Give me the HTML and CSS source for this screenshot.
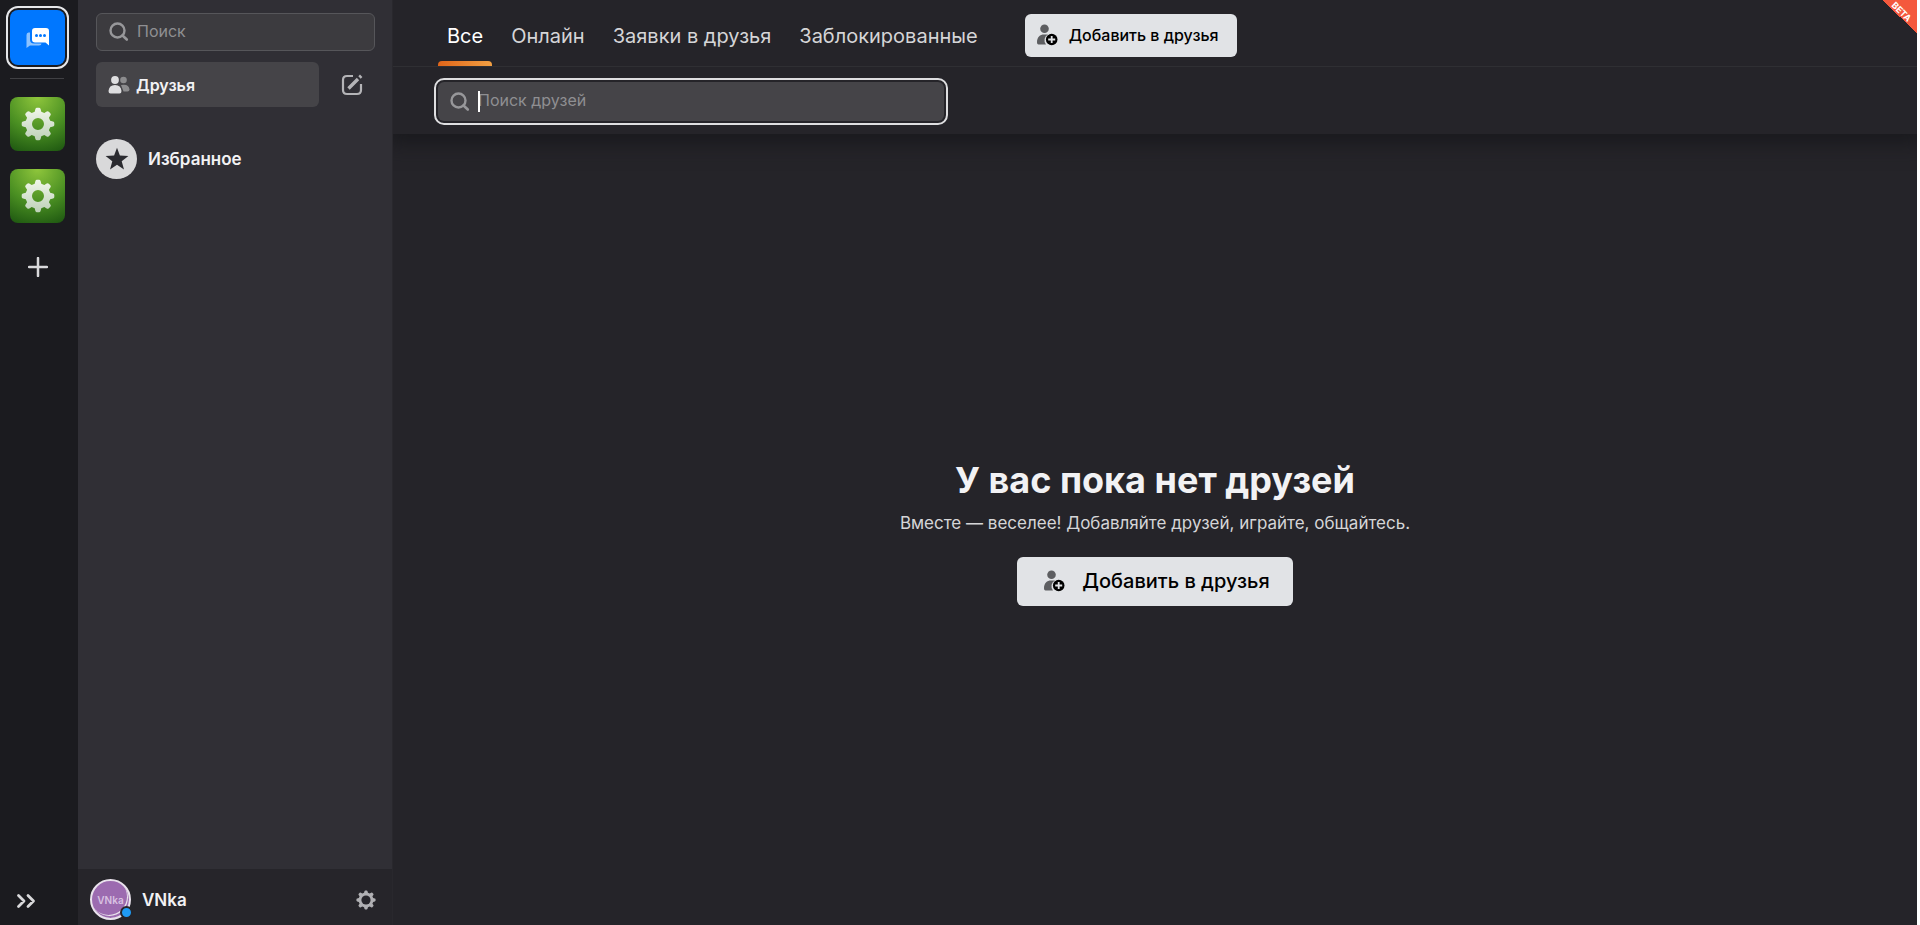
FILE: index.html
```
<!DOCTYPE html>
<html lang="ru">
<head>
<meta charset="utf-8">
<title>Друзья</title>
<link rel="stylesheet" href="styles.css">
</head>
<body>
<svg class="sprite" aria-hidden="true">
  <defs>
    <linearGradient id="gear-fill" x1="0" y1="0" x2="0" y2="1">
      <stop offset="0" stop-color="#f1f7ea"/>
      <stop offset="1" stop-color="#bdd0b8"/>
    </linearGradient>
  </defs>
  <symbol id="gear" viewBox="0 0 34 34">
    <path fill-rule="evenodd" d="M13.700 4.800L14.400 2Q14.800.7 16 .7H18Q19.200.7 19.600 2L20.300 4.800 23.300 6.100 25.700 4.500Q26.800 3.700 27.800 4.700L29.300 6.200Q30.300 7.200 29.500 8.300L27.900 10.700 29.200 13.700 32 14.400Q33.300 14.800 33.300 16V18Q33.300 19.200 32 19.600L29.200 20.300 27.900 23.300 29.500 25.700Q30.300 26.800 29.300 27.800L27.800 29.300Q26.800 30.300 25.700 29.500L23.300 27.900 20.300 29.200 19.600 32Q19.200 33.300 18 33.300H16Q14.800 33.300 14.400 32L13.700 29.200 10.700 27.900 8.300 29.500Q7.200 30.300 6.200 29.300L4.700 27.800Q3.700 26.800 4.500 25.700L6.100 23.300 4.800 20.300 2 19.600Q.7 19.200.7 18V16Q.7 14.800 2 14.400L4.800 13.700 6.100 10.700 4.500 8.300Q3.700 7.200 4.700 6.200L6.200 4.700Q7.200 3.700 8.300 4.500L10.700 6.100zM17 11a6 6 0 1 0 0 12a6 6 0 1 0 0-12z"/>
  </symbol>
  <symbol id="magnifier" viewBox="0 0 20 20">
    <circle cx="8.500" cy="8.500" r="7" fill="none" stroke="currentColor" stroke-width="2.400"/>
    <path d="M13.500 13.500L17.800 17.500" stroke="currentColor" stroke-width="2.600" stroke-linecap="round"/>
  </symbol>
  <symbol id="user-add" viewBox="0 0 22 22">
    <circle cx="8.500" cy="4.800" r="4.300" fill="#5d5e61"/>
    <path d="M1 18.500c0-5.500 3-8 7-8h4a6.500 6.500 0 0 0-2 10H2.500q-1.500 0-1.500-2z" fill="#5d5e61"/>
    <circle cx="15.700" cy="15.500" r="5.800" fill="#000"/>
    <path d="M15.700 12v7M12.200 15.500h7" stroke="#e1e3e6" stroke-width="1.800"/>
  </symbol>
</svg>
<div class="app">
  <nav class="rail" aria-label="Серверы">
    <button class="tile tile-chat" aria-label="Чаты">
      <svg width="24" height="22" viewBox="0 0 24 22"><path d="M4 5.500H2.500Q.5 5.500.5 8v13l3.500-2.500h9q2.500 0 2.500-2H8q-4 0-4-4z" fill="#8dc3ff"/><path d="M9 1h11q3 0 3 3v14.500l-3.500-3H9q-3 0-3-3V4q0-3 3-3z" fill="#fff"/><g fill="#0077ff"><circle cx="10.500" cy="8.500" r="1.500"/><circle cx="14.500" cy="8.500" r="1.500"/><circle cx="18.500" cy="8.500" r="1.500"/></g></svg>
    </button>
    <div class="divider"></div>
    <button class="tile tile-game" aria-label="Сервер 1"><svg width="34" height="34" fill="url(#gear-fill)"><use href="#gear"/></svg></button>
    <button class="tile tile-game" aria-label="Сервер 2"><svg width="34" height="34" fill="url(#gear-fill)"><use href="#gear"/></svg></button>
    <button class="plain add" aria-label="Добавить"><svg width="20" height="20"><path d="M10 1v18M1 10h18" stroke="#d9d9db" stroke-width="2.500" stroke-linecap="round"/></svg></button>
    <button class="plain expand" aria-label="Развернуть"><svg width="20" height="16" fill="none" stroke="#d9d9db" stroke-width="2.800" stroke-linecap="round" stroke-linejoin="round"><path d="M2.500 2.500L8 8l-5.500 5.500M12 2.500L17.500 8 12 13.500"/></svg></button>
  </nav>
  <aside class="sidebar">
    <div class="side-body">
      <label class="field side-search"><svg width="20" height="20"><use href="#magnifier"/></svg><input type="text" placeholder="Поиск" aria-label="Поиск"></label>
      <div class="friends-row">
        <a class="friends" href="#friends"><svg width="22" height="18"><g fill="#8c8c8e"><circle cx="15.500" cy="4" r="3.300"/><path d="M13 9q8-1.500 8.500 4.500 0 2-2 2h-4z"/></g><circle cx="7" cy="4" r="3.900" fill="#dedee0"/><path d="M.5 15q.5-6 6.500-6t6.500 6q0 2.500-2 2.500h-9q-2 0-2-2.500z" fill="#dedee0"/></svg>Друзья</a>
        <button class="plain compose" aria-label="Новый чат"><svg width="22" height="22" fill="none" stroke="#b4b4b7" stroke-width="2.200"><path d="M12 2H6Q2 2 2 6v10q0 4 4 4h10q4 0 4-4v-6"/><path d="M7.500 14.500l9.500-9.500M18.500 3.500l1.700-1.700" stroke-width="3.400"/></svg></button>
      </div>
      <a class="favorites" href="#favorites"><span class="star"><svg width="24" height="24"><path d="M12 .8l2.900 7.800 8.500.4-6.700 5.200 2.300 8.300-7-4.700-7 4.700 2.300-8.300L.6 9l8.500-.4z" fill="#2b2b30"/></svg></span>Избранное</a>
    </div>
    <footer class="profile">
      <span class="avatar"><span class="avatar-face">VNka</span><span class="status"></span></span>
      <span class="name">VNka</span>
      <button class="plain settings" aria-label="Настройки"><svg width="20" height="20" fill="#b0b0b3"><use href="#gear"/><circle cx="10" cy="10" r="4.600" fill="#26252a"/></svg></button>
    </footer>
  </aside>
  <main class="main">
    <header class="header">
      <div class="tabs">
        <a class="tab active" href="#all">Все</a>
        <a class="tab" href="#online">Онлайн</a>
        <a class="tab" href="#requests">Заявки в друзья</a>
        <a class="tab" href="#blocked">Заблокированные</a>
        <button class="btn btn-small"><svg width="22" height="22"><use href="#user-add"/></svg>Добавить в друзья</button>
      </div>
      <div class="search-row">
        <label class="field friend-search"><svg width="20" height="20"><use href="#magnifier"/></svg><input type="text" placeholder="Поиск друзей" aria-label="Поиск друзей"><span class="caret"></span></label>
      </div>
    </header>
    <section class="empty">
      <h1>У вас пока нет друзей</h1>
      <p>Вместе — веселее! Добавляйте друзей, играйте, общайтесь.</p>
      <button class="btn btn-large"><svg width="22" height="22"><use href="#user-add"/></svg>Добавить в друзья</button>
    </section>
    <div class="beta"><span>BETA</span></div>
  </main>
</div>
</body>
</html>
```
FILE: styles.css
```
* { box-sizing: border-box; }
body { margin: 0; font-family: Inter, "Liberation Sans", sans-serif; color: #f2f2f4; background: #fff; }
a { color: inherit; text-decoration: none; }
button { font: inherit; border: 0; padding: 0; }
svg { display: block; flex: none; }
.sprite { position: absolute; width: 0; height: 0; }
.app { display: flex; min-height: 100vh; padding-right: 3px; }
.plain { background: none; }

.rail { width: 78px; display: flex; flex-direction: column; align-items: flex-start; padding: 10px 10px 16px; background: #1b1b1f; }
.tile { width: 55px; height: 54px; border-radius: 8px; display: grid; place-items: center; flex: none; }
.tile-chat { height: 55px; background: #0077ff; outline: 2px solid #e6e7ea; outline-offset: 2px; }
.divider { width: 54px; height: 1px; margin: 13px 0 18px; background: #404044; }
.tile-game { margin-bottom: 18px; background: radial-gradient(circle at 50% 0, #8fc63c, #4a8f22 55%, #1c5510 100%); }
.add { width: 55px; margin-top: 16px; display: grid; place-items: center; }
.expand { margin-top: auto; margin-left: 6px; }

.sidebar { width: 315px; display: flex; flex-direction: column; background: #302f35; border-right: 1px solid #29282d; }
.side-body { flex: 1; padding: 13px 17px 0 18px; }
.field { display: flex; align-items: center; gap: 8px; color: #97979a; border-radius: 6px; }
.field input { flex: 1; min-width: 0; border: 0; outline: 0; padding: 0 0 3px; background: none; font: inherit; color: #fff; }
.field input::placeholder { color: #8f8f92; opacity: 1; }
.side-search { height: 38px; padding: 0 12px; font-size: 16px; background: #3c3b3f; border: 1px solid #56565a; }
.friends-row { display: flex; align-items: center; gap: 22px; margin-top: 11px; }
.friends { width: 223px; height: 45px; display: flex; align-items: center; gap: 6px; padding: 0 12px; border-radius: 6px; background: #454448; font-size: 16px; font-weight: 600; }
.favorites { display: flex; align-items: center; gap: 11px; margin-top: 32px; font-size: 17px; line-height: 20px; font-weight: 600; }
.star { width: 41px; height: 40px; border-radius: 50%; background: #d9d9da; display: grid; place-items: center; }
.profile { height: 56px; display: flex; align-items: center; padding: 5px 16px 0 12px; background: #26252a; }
.avatar { position: relative; width: 41px; height: 41px; }
.avatar-face { width: 100%; height: 100%; display: grid; place-items: center; border-radius: 50%; border: 2px solid #e9e2ec; background: #9c6bb0; box-shadow: inset -1px -2px 0 #9c6bb0, inset -2px -3px 0 #e9e2ec; font-size: 10px; font-weight: 600; color: #d9c2e2; }
.status { position: absolute; right: -2px; bottom: 1px; width: 13px; height: 13px; border-radius: 50%; background: #1f9bf5; border: 2px solid #26252a; }
.name { flex: 1; margin-left: 11px; font-size: 17px; font-weight: 600; }

.main { position: relative; flex: 1; min-width: 0; display: flex; flex-direction: column; background: #252429; overflow: hidden; }
.header { box-shadow: 0 4px 18px 6px #1a1a1e; background: #252429; }
.tabs { height: 67px; display: flex; align-items: stretch; gap: 10px; padding-left: 45px; border-bottom: 1px solid #2f2f33; font-size: 20px; color: #d5d5d7; }
.tab { display: flex; align-items: center; padding: 6px 9px 0; position: relative; }
.active { color: #fff; }
.active::after { content: ""; position: absolute; left: 0; right: 0; bottom: 0; height: 5px; border-radius: 4px 4px 0 0; background: linear-gradient(90deg, #e06519, #f2a043); }
.btn { display: flex; align-items: center; border-radius: 6px; background: #e1e3e6; color: #000; font-weight: 500; }
.btn-small { align-self: center; height: 43px; gap: 11px; padding: 0 18px 0 11px; margin: 4px 0 0 28px; font-size: 16px; }
.search-row { padding: 15px 45px 13px; }
.friend-search { position: relative; width: 506px; height: 39px; padding: 0 12px; background: #454448; outline: 2px solid #dedee0; outline-offset: 2px; font-size: 16px; }
.caret { position: absolute; left: 40px; top: 9px; width: 2px; height: 21px; background: #fff; }
.empty { flex: 1; display: flex; flex-direction: column; align-items: center; justify-content: center; padding-top: 4px; }
h1 { margin: 0; font-size: 36px; line-height: 44px; font-weight: 700; }
p { margin: 9px 0 22px; font-size: 17px; line-height: 24px; color: #d5d5d7; }
.btn-large { height: 49px; gap: 17px; padding: 0 23px 0 26px; font-size: 20px; }
.beta { position: absolute; top: 0; right: 0; width: 35px; height: 33px; display: flex; align-items: flex-start; justify-content: center; padding: 7px 0 0 5px; background: linear-gradient(to top right, transparent 50%, #f4593d 50%); color: #fff; font-size: 9px; font-weight: 700; line-height: 9px; }
.beta span { transform: rotate(45deg); }
```
